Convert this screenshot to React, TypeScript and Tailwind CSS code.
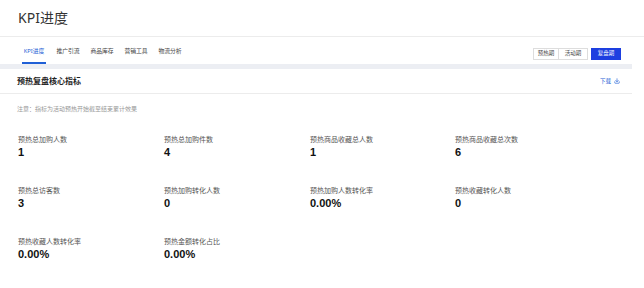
import { Download } from 'lucide-react'

const tabs = ['KPI进度', '推广引流', '商品库存', '营销工具', '物流分析']

const stats = [
  { label: '预热总加购人数', value: '1' },
  { label: '预热总加购件数', value: '4' },
  { label: '预热商品收藏总人数', value: '1' },
  { label: '预热商品收藏总次数', value: '6' },
  { label: '预热总访客数', value: '3' },
  { label: '预热加购转化人数', value: '0' },
  { label: '预热加购人数转化率', value: '0.00%' },
  { label: '预热收藏转化人数', value: '0' },
  { label: '预热收藏人数转化率', value: '0.00%' },
  { label: '预热金额转化占比', value: '0.00%' },
]

export default function App() {
  return (
    <div className="h-[288px] w-[644px] overflow-hidden bg-white font-['Noto_Sans','Noto_Sans_CJK_SC',sans-serif] text-[#222]">
      {/* Page title */}
      <div className="h-[36px] pl-[18px] pt-[8px] text-[14px] leading-[20px] text-[#333]">KPI进度</div>

      {/* Tabs + period switch */}
      <div className="flex h-[28px] items-stretch justify-between border-t border-[#ececec] pl-[22px] pr-[23px]">
        <div className="flex items-stretch gap-[10px]">
          {tabs.map((t, i) => (
            <div
              key={t}
              className={
                i === 0
                  ? 'flex w-[24px] items-center justify-center border-b-2 border-[#1f5fd6] pt-[4px] text-[5.8px] text-[#1f5fd6]'
                  : 'flex w-[24px] items-center justify-center border-b-2 border-transparent pt-[4px] text-[5.8px] text-[#444]'
              }
            >
              {t}
            </div>
          ))}
        </div>
        <div className="flex items-center pt-[6px]">
          <div className="flex h-[12px] w-[26px] items-center justify-center border border-[#ddd] text-[5.5px] text-[#444]">预热期</div>
          <div className="flex h-[12px] w-[29px] items-center justify-center border border-l-0 border-[#ddd] text-[5.5px] text-[#444]">活动期</div>
          <div className="ml-[3px] flex h-[12px] w-[30px] items-center justify-center bg-[#1d3fe0] text-[5.5px] text-white">复盘期</div>
        </div>
      </div>

      <div className="w-[632px]">
        <div className="h-[5px] bg-[#eceef3]" />

        {/* Card header */}
        <div className="flex h-[25px] items-center justify-between border-b border-[#ececec] pl-[17px] pr-[12px]">
          <div className="text-[8px] font-bold text-[#222]">预热复盘核心指标</div>
          <div className="flex items-center gap-[3px] text-[5.5px] text-[#1f5fd6]">
            下载
            <Download className="h-[6px] w-[6px]" strokeWidth={2.5} />
          </div>
        </div>

        {/* Note */}
        <div className="pl-[17px] pt-[11px] text-[6px] leading-[8px] text-[#999]">注意：指标为活动预热开始截至结束累计效果</div>

        {/* Metrics */}
        <div className="mt-[22px] grid grid-cols-[146px_146px_145px_145px] gap-y-[27px] pl-[18px]">
          {stats.map((s) => (
            <div key={s.label} className="flex flex-col gap-[2px]">
              <div className="text-[7px] leading-[9px] text-[#555]">{s.label}</div>
              <div className="font-['Liberation_Sans',sans-serif] text-[11px] font-bold leading-[13px] text-[#111]">{s.value}</div>
            </div>
          ))}
        </div>
      </div>
    </div>
  )
}
